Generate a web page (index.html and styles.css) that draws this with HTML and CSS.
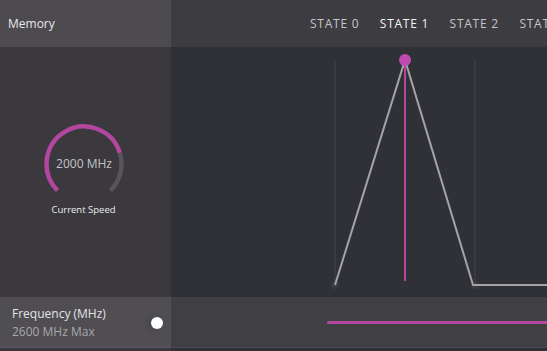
FILE: index.html
```html
<!DOCTYPE html>
<html>
<head>
<meta charset="utf-8">
<link rel="stylesheet" href="styles.css">
</head>
<body>
<div class="app">
  <div class="row header">
    <div class="left hleft"><span class="title">Memory</span></div>
    <div class="right hright">
      <span class="state">STATE 0</span>
      <span class="state active">STATE 1</span>
      <span class="state">STATE 2</span>
      <span class="state last">STAT</span>
    </div>
  </div>
  <div class="row body">
    <div class="left bleft">
      <div class="gauge">
        <svg width="84" height="84" viewBox="0 0 84 84">
          <path d="M 15.5 68.5 A 37.5 37.5 0 1 1 77.9 31" fill="none" stroke="#b3479f" stroke-width="4.5"/>
          <path d="M 77.9 31 A 37.5 37.5 0 0 1 68.5 68.5" fill="none" stroke="#57555b" stroke-width="4.5"/>
        </svg>
        <span class="gval">2000 MHz</span>
      </div>
      <div class="glabel">Current Speed</div>
    </div>
    <div class="right bright">
      <svg class="chart" width="376" height="250" viewBox="0 0 376 250">
        <line x1="164" y1="13" x2="164" y2="238" stroke="#393a40" stroke-width="2"/>
        <line x1="304" y1="13" x2="304" y2="238" stroke="#393a40" stroke-width="2"/>
        <circle cx="164" cy="238" r="4" fill="#3b3c42"/>
        <circle cx="304" cy="238" r="4" fill="#3b3c42"/>
        <polyline points="164,238 234,13 302,238 376,238" fill="none" stroke="#a4a4a6" stroke-width="2"/>
        <line x1="234" y1="13" x2="234" y2="234" stroke="#b3479f" stroke-width="2"/>
        <circle cx="234" cy="13" r="6" fill="#bf4bb2"/>
      </svg>
    </div>
  </div>
  <div class="row foot">
    <div class="left fleft">
      <div class="ftext">
        <div class="fname">Frequency (MHz)</div>
        <div class="fmax">2600 MHz Max</div>
      </div>
      <span class="knob"></span>
    </div>
    <div class="right fright">
      <div class="slider"></div>
    </div>
  </div>
  <div class="row bottom">
    <div class="left bbl"></div>
    <div class="right bbr"></div>
  </div>
</div>
</body>
</html>
```
FILE: styles.css
```css
html, body {
  margin: 0;
  padding: 0;
  background: #303136;
  overflow: hidden;
}
.app {
  width: 547px;
  height: 351px;
  display: flex;
  flex-direction: column;
  font-family: "Open Sans", "Noto Sans", sans-serif;
}
.row {
  display: flex;
}
.left {
  width: 171px;
  flex: none;
}
.right {
  flex: 1;
  min-width: 0;
  overflow: hidden;
}
.header {
  height: 47px;
}
.hleft {
  background: #4d4a50;
  display: flex;
  align-items: center;
  padding-left: 8px;
  box-sizing: border-box;
}
.title {
  color: #e8e8e8;
  font-size: 12px;
  margin-top: -1px;
}
.hright {
  background: #3d3c41;
  display: flex;
  align-items: center;
  padding-left: 139px;
  gap: 20.5px;
  white-space: nowrap;
}
.state {
  color: #c6c6c8;
  font-size: 12px;
  letter-spacing: 0.75px;
  margin-top: -1px;
}
.state.active {
  color: #f4f4f4;
}
.body {
  height: 250px;
}
.bleft {
  background: #3b393e;
  display: flex;
  flex-direction: column;
  align-items: center;
  padding-top: 75px;
  box-sizing: border-box;
}
.gauge {
  position: relative;
  width: 84px;
  height: 84px;
  margin-left: -3px;
}
.gauge svg {
  display: block;
}
.gval {
  position: absolute;
  left: 0;
  right: 0;
  top: 33px;
  text-align: center;
  color: #c4c4c6;
  font-size: 12px;
}
.glabel {
  color: #ececec;
  font-size: 9.5px;
  margin-top: -3px;
  margin-left: -4px;
}
.bright {
  background: #303136;
}
.chart {
  display: block;
}
.foot {
  height: 50px;
}
.fleft {
  background: #504d53;
  display: flex;
  align-items: center;
  padding-left: 12px;
  padding-right: 8px;
  box-sizing: border-box;
}
.ftext {
  flex: 1;
  margin-top: 1px;
}
.fname {
  color: #e4e4e6;
  font-size: 12px;
  line-height: 18px;
}
.fmax {
  color: #a9a8ab;
  font-size: 12px;
  line-height: 18px;
}
.knob {
  width: 12px;
  height: 12px;
  border-radius: 50%;
  background: #ffffff;
  box-shadow: -3px 0 6px rgba(0,0,0,0.15);
  margin-top: 1px;
}
.fright {
  background: #403f44;
  display: flex;
  align-items: center;
  padding-left: 156px;
}
.slider {
  flex: 1;
  height: 3px;
  background: #b3479f;
  border-radius: 2px 0 0 2px;
  margin-top: 1px;
}
.bottom {
  height: 4px;
}
.bbl {
  background: #3a383d;
  border-top: 1px solid #5a575e;
}
.bbr {
  background: #303136;
  border-top: 1px solid #4a494e;
}
```
